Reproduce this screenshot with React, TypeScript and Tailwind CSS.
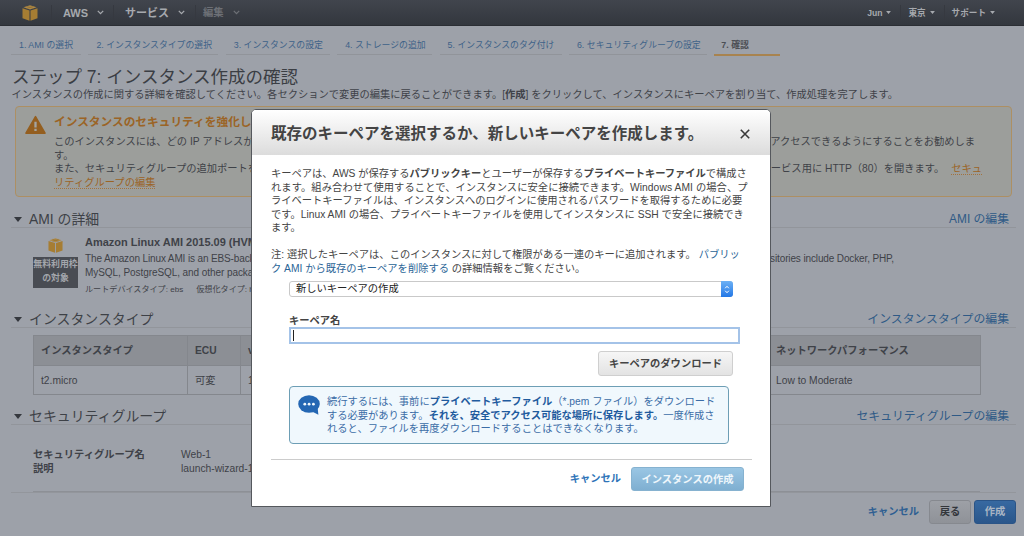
import type { ReactNode } from 'react';

const steps = [
  { label: '1. AMI の選択', width: 'w-[70px]' },
  { label: '2. インスタンスタイプの選択', width: 'w-[130px]' },
  { label: '3. インスタンスの設定', width: 'w-[104px]' },
  { label: '4. ストレージの追加', width: 'w-[95px]' },
  { label: '5. インスタンスのタグ付け', width: 'w-[122px]' },
  { label: '6. セキュリティグループの設定', width: 'w-[138px]' },
];

function CubeIcon({ className }: { className: string }) {
  return (
    <svg viewBox="0 0 16 16" className={className}>
      <path d="M8 0.3 L14.6 2.3 L8 4.4 L1.4 2.3 Z" fill="#b08a44" />
      <path d="M0.5 3.2 L7.5 5.4 V15.7 L0.5 13.2 Z" fill="#a67d33" />
      <path d="M15.5 3.2 L8.5 5.4 V15.7 L15.5 13.2 Z" fill="#a67d33" />
      <path d="M4.7 1.4 L11.4 3.4 M11.4 1.4 L4.7 3.4" stroke="#8b6b34" strokeWidth="0.5" />
    </svg>
  );
}

function Chevron({ className }: { className: string }) {
  return (
    <svg viewBox="0 0 7 5" className={className} fill="none" stroke="currentColor" strokeWidth="1.3">
      <path d="M0.8 0.9 L3.5 3.6 L6.2 0.9" />
    </svg>
  );
}

function Caret({ className }: { className: string }) {
  return (
    <svg viewBox="0 0 8 5" className={className} fill="currentColor">
      <path d="M0 0 H8 L4 5 Z" />
    </svg>
  );
}

function NavBar() {
  return (
    <nav className="flex h-[26px] items-center border-b border-[#2b2e34] bg-linear-to-b from-[#41454d] to-[#33373e] font-bold text-[#a6a9ae]">
      <CubeIcon className="ml-[22px] h-4 w-4" />
      <div className="ml-[13px] h-4 w-px bg-[#363940]" />
      <span className="ml-[11px] w-[26px] text-[11px] leading-4">AWS</span>
      <Chevron className="ml-2 h-[5px] w-[7px]" />
      <div className="ml-[9px] h-4 w-px bg-[#363940]" />
      <span className="ml-[11px] w-[45px] text-[11px] leading-4 whitespace-nowrap">サービス</span>
      <Chevron className="ml-2 h-[5px] w-[7px]" />
      <div className="ml-2.5 h-4 w-px bg-[#363940]" />
      <span className="ml-[7px] w-[21px] text-[10.3px] leading-4 whitespace-nowrap text-[#6d7076]">編集</span>
      <Chevron className="ml-[9px] h-[5px] w-[7px] text-[#6d7076]" />
      <div className="ml-auto flex items-center text-[8.6px] leading-4">
        <span>Jun</span>
        <Caret className="ml-1 h-[3px] w-[5px]" />
        <div className="ml-[9px] h-4 w-px bg-[#363940]" />
        <span className="ml-[7px]">東京</span>
        <Caret className="ml-1 h-[3px] w-[5px]" />
        <div className="ml-[9px] h-4 w-px bg-[#363940]" />
        <span className="ml-[7px]">サポート</span>
        <Caret className="mr-[29px] ml-1 h-[3px] w-[5px]" />
      </div>
    </nav>
  );
}

function Steps() {
  return (
    <div className="ml-[11px] flex h-[30px] items-end gap-[7.4px] pb-px text-[8.85px] leading-[18px] whitespace-nowrap">
      {steps.map((s) => (
        <div key={s.label} className={`${s.width} shrink-0 border-b border-[#91949a] pl-2 text-[#3d6288]`}>
          {s.label}
        </div>
      ))}
      <div className="-mb-px w-[66px] shrink-0 border-b-2 border-[#a8834f] pl-[7px] font-bold text-[#4c4f55]">7. 確認</div>
    </div>
  );
}

function Alert() {
  return (
    <div className="ml-[15px] flex h-[91px] w-[997px] rounded-[4px] border border-[#ad8f63] bg-[#9c9e9b] text-[10.28px] leading-[13.5px] whitespace-nowrap">
      <svg viewBox="0 0 22 20" className="mt-2 ml-[9px] h-5 w-[21px] shrink-0">
        <path d="M11 1.2 L21 18.6 H1 Z" fill="#945f20" stroke="#945f20" strokeWidth="1.6" strokeLinejoin="round" />
        <path d="M9.8 6.5 h2.4 v6 h-2.4 Z M9.8 14 h2.4 v2.4 h-2.4 Z" fill="#a4a5a2" />
      </svg>
      <div className="ml-2 text-[#3f4248]">
        <div className="mt-[7px] h-[21px] text-[11.7px] leading-4 font-bold text-[#9b6426]">インスタンスのセキュリティを強化し</div>
        <div className="flex w-[921px] justify-between">
          <span>このインスタンスには、どの IP アドレスか</span>
          <span>アクセスできるようにすることをお勧めしま</span>
        </div>
        <div>す。</div>
        <div className="flex w-[928px] justify-between">
          <span>また、セキュリティグループの追加ポートを</span>
          <span>
            ービス用に HTTP（80）を開きます。{' '}
            <span className="ml-1 border-b border-dotted border-[#a3723e] text-[#9b6426]">セキュ</span>
          </span>
        </div>
        <span className="border-b border-dotted border-[#a3723e] text-[#9b6426]">リティグループの編集</span>
      </div>
    </div>
  );
}

function SectionHeader({ title, link }: { title: string; link: string }) {
  return (
    <div className="ml-[11px] flex h-[17px] w-[1005px] items-center border-b border-[#92959b] leading-4 whitespace-nowrap">
      <Caret className="ml-[3px] h-[5px] w-2 text-[#35383e]" />
      <span className="ml-[7px] text-[13.9px] text-[#3e4147]">{title}</span>
      <span className="mr-[7px] ml-auto text-[11.85px] text-[#2f5a86]">{link}</span>
    </div>
  );
}

function AmiDetails() {
  return (
    <div className="mt-[6px] ml-[33px] flex h-[77px] whitespace-nowrap text-[#3f4248]">
      <div className="w-[45px] shrink-0">
        <CubeIcon className="mt-[4px] ml-[15px] h-[15px] w-[15px]" />
        <div className="mt-[4px] h-[31px] w-[45px] bg-[#494c53] text-center text-[8.9px] leading-[14px] font-bold text-[#a3a6ac]">
          無料利用枠
          <br />
          の対象
        </div>
      </div>
      <div className="ml-[7px]">
        <div className="h-[18px] text-[11px] leading-4 font-bold">Amazon Linux AMI 2015.09 (HVM)</div>
        <div className="flex w-[809px] justify-between text-[10px] leading-[13.5px] tracking-[-0.13px]">
          <span>The Amazon Linux AMI is an EBS-backed</span>
          <span>sitories include Docker, PHP,</span>
        </div>
        <div className="text-[10px] leading-[13.5px] tracking-[-0.07px]">MySQL, PostgreSQL, and other packages</div>
        <div className="mt-1 text-[8.1px] leading-[13px]">
          ルートデバイスタイプ: ebs<span className="ml-[13px]">仮想化タイプ: hvm</span>
        </div>
      </div>
    </div>
  );
}

function InstanceTable() {
  return (
    <div className="mt-[7px] ml-[33px] grid w-[948px] grid-cols-[154px_53px_528px_1fr] border-t border-l border-[#84878d] text-[10.28px] text-[#3f4248]">
      {['インスタンスタイプ', 'ECU', 'vCPU', 'ネットワークパフォーマンス'].map((h) => (
        <div key={h} className="h-[30px] border-r border-b border-[#84878d] bg-[#8c8f95] pl-[7px] leading-[29px] font-bold">
          {h}
        </div>
      ))}
      {['t2.micro', '可変', '1', 'Low to Moderate'].map((c) => (
        <div key={c} className="h-[29px] border-r border-b border-[#84878d] pl-[7px] leading-[29px]">
          {c}
        </div>
      ))}
    </div>
  );
}

function SecurityGroup() {
  return (
    <>
      <div className="ml-[33px] flex h-[67px] w-[947px] border-b border-[#8d9096] pt-[23px] text-[10.28px] leading-[14px] text-[#3f4248]">
        <div className="w-[148px] font-bold">
          セキュリティグループ名
          <br />
          説明
        </div>
        <div>
          Web-1
          <br />
          launch-wizard-1
        </div>
      </div>
      <div className="ml-[11px] h-px w-[1005px] bg-[#93969c]" />
    </>
  );
}

function Button({ className, children }: { className: string; children: ReactNode }) {
  return (
    <button className={`rounded-[3px] border text-center text-[10.28px] font-bold whitespace-nowrap ${className}`}>
      {children}
    </button>
  );
}

function KeyPairDialog() {
  return (
    <div className="absolute top-[109px] left-[251px] h-[398px] w-[520px] overflow-hidden rounded-t-[5px] border border-[#55585d] bg-white whitespace-nowrap text-[#444]">
      <header className="flex h-[45px] items-center bg-linear-to-b from-white to-[#dcdcdc] pt-[3px] pl-[19px]">
        <h2 className="text-[15.5px] leading-5 font-bold">既存のキーペアを選択するか、新しいキーペアを作成します。</h2>
        <svg viewBox="0 0 10 10" className="mr-5 ml-auto h-2.5 w-2.5" fill="none" stroke="#3a3a3a" strokeWidth="1.6">
          <path d="M0.8 0.8 L9.2 9.2 M9.2 0.8 L0.8 9.2" />
        </svg>
      </header>
      <div className="mt-[12px] ml-[19px] text-[10.28px] leading-[13.5px]">
        <div className="tracking-[-0.02px]">
          キーペアは、AWS が保存する<b>パブリックキー</b>とユーザーが保存する<b>プライベートキーファイル</b>で構成さ
        </div>
        <div className="tracking-[0.08px]">れます。組み合わせて使用することで、インスタンスに安全に接続できます。Windows AMI の場合、プ</div>
        <div>ライベートキーファイルは、インスタンスへのログインに使用されるパスワードを取得するために必要</div>
        <div>です。Linux AMI の場合、プライベートキーファイルを使用してインスタンスに SSH で安全に接続でき</div>
        <div>ます。</div>
        <div className="mt-[13.5px]">
          注: 選択したキーペアは、このインスタンスに対して権限がある一連のキーに追加されます。 <a className="text-[#2a6496]">パブリッ</a>
        </div>
        <div>
          <a className="text-[#2a6496]">ク AMI から既存のキーペアを削除する</a> の詳細情報をご覧ください。
        </div>
      </div>

      <div className="ml-[37px] text-[10.28px]">
        <div className="mt-[6px] flex h-4 w-[444px] items-center rounded-[3px] border border-[#c9c9c9] text-[#222]">
          <span className="ml-1.5 leading-[14px]">新しいキーペアの作成</span>
          <span className="-mr-px ml-auto flex h-4 w-3 items-center justify-center rounded-r-[3px] bg-linear-to-b from-[#6cb1f5] to-[#2177e6]">
            <svg viewBox="0 0 6 10" className="h-[9px] w-[6px]" fill="none" stroke="white" strokeWidth="1.1">
              <path d="M1 3.6 L3 1.4 L5 3.6 M1 6.4 L3 8.6 L5 6.4" />
            </svg>
          </span>
        </div>
        <div className="mt-4 leading-[15px] font-bold">キーペア名</div>
        <div className="mt-[-1px] flex h-[17px] w-[451px] items-center border-2 border-[#a4c3e8] pl-[2px]">
          <div className="h-[11px] w-px bg-[#222]" />
        </div>
        <Button className="mt-[7px] ml-[309px] block h-[25px] w-[135px] border-[#cfcfcf] bg-linear-to-b from-[#f6f6f6] to-[#e3e3e3] leading-[22px]">
          キーペアのダウンロード
        </Button>
        <div className="mt-[10px] flex h-[58px] w-[440px] rounded-[4px] border border-[#6d9eb5] bg-[#f0f8fd] pt-[8px] leading-[13.7px] text-[#3b6ca6]">
          <svg viewBox="0 0 22 20" className="ml-2 h-5 w-[22px] shrink-0">
            <ellipse cx="11" cy="9" rx="10.8" ry="8.8" fill="#2467b3" />
            <path d="M13 16 L20.4 19.8 L19.6 12.5 Z" fill="#2467b3" />
            <circle cx="6.8" cy="9.2" r="1.4" fill="#f0f8fd" />
            <circle cx="11.1" cy="9.2" r="1.4" fill="#f0f8fd" />
            <circle cx="15.4" cy="9.2" r="1.4" fill="#f0f8fd" />
          </svg>
          <div className="ml-[7px]">
            続行するには、事前に<b className="text-[#1f5b9e]">プライベートキーファイル</b>（*.pem ファイル）をダウンロード
            <br />
            する必要があります。<b className="text-[#1f5b9e]">それを、安全でアクセス可能な場所に保存します。</b>一度作成さ
            <br />
            れると、ファイルを再度ダウンロードすることはできなくなります。
          </div>
        </div>
      </div>

      <footer className="mt-[15px] ml-[19px] flex w-[481px] items-center justify-end border-t border-[#ccc] pt-[7px] pr-2">
        <span className="mr-[10px] text-[10.28px] font-bold text-[#2f74b8]">キャンセル</span>
        <Button className="h-6 w-[113px] border-[#86b2d0] bg-linear-to-b from-[#9ac6e4] to-[#7fafd1] leading-[21px] text-[#eef6fb]">
          インスタンスの作成
        </Button>
      </footer>
    </div>
  );
}

export default function App() {
  return (
    <div className="relative h-[536px] w-[1024px] overflow-hidden bg-[#9da1a9] font-['Liberation_Sans','Noto_Sans_CJK_JP',sans-serif]">
      <NavBar />
      <Steps />
      <h1 className="mt-[11px] ml-[12px] text-[17.5px] leading-5 text-[#3b3e44]">ステップ 7: インスタンス作成の確認</h1>
      <p className="mt-[1px] mb-[4px] ml-[11.5px] text-[10.28px] leading-[14px] whitespace-nowrap text-[#3f4248]">
        インスタンスの作成に関する詳細を確認してください。各セクションで変更の編集に戻ることができます。[<b>作成</b>]
        をクリックして、インスタンスにキーペアを割り当て、作成処理を完了します。
      </p>
      <Alert />
      <div className="mt-[14px]" />
      <SectionHeader title="AMI の詳細" link="AMI の編集" />
      <AmiDetails />
      <SectionHeader title="インスタンスタイプ" link="インスタンスタイプの編集" />
      <InstanceTable />
      <div className="mt-[13px]" />
      <SectionHeader title="セキュリティグループ" link="セキュリティグループの編集" />
      <SecurityGroup />
      <div className="mt-[7px] flex items-center justify-end pr-2">
        <span className="mr-[10px] text-[10.28px] font-bold text-[#2f5f92]">キャンセル</span>
        <Button className="mr-[3px] h-6 w-[42px] border-[#86898f] bg-linear-to-b from-[#9da0a6] to-[#8f9298] leading-[22px] text-[#33363b]">
          戻る
        </Button>
        <Button className="h-6 w-[42px] border-[#2a5487] bg-linear-to-b from-[#3769a1] to-[#2a568b] leading-[22px] text-[#a9b5c4]">
          作成
        </Button>
      </div>
      <KeyPairDialog />
    </div>
  );
}
